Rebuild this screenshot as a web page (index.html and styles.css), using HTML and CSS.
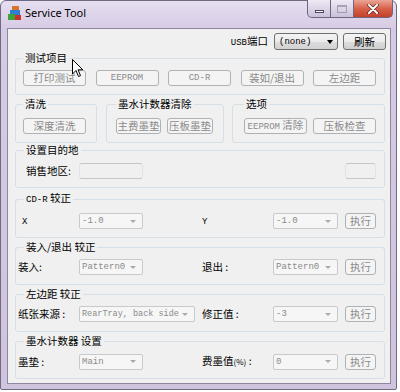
FILE: index.html
```html
<!DOCTYPE html>
<html lang="zh-CN">
<head>
    <meta charset="UTF-8">
    <title>Service Tool</title>
    <link rel="stylesheet" href="styles.css">
</head>
<body>
<div class="window">
    <div class="titlebar">
        <svg class="app-icon" width="16" height="16" viewBox="0 0 16 16">
            <rect x="5" y="1" width="7" height="6" fill="#d9722b"/>
            <rect x="3" y="5" width="10" height="6" fill="#2f7fd0"/>
            <rect x="1" y="9" width="7" height="6" fill="#3fa33a"/>
            <rect x="8" y="10" width="6" height="5" fill="#c8322a"/>
        </svg>
        <span class="title">Service Tool</span>
        <div class="caption">
            <span class="cap cap-min"><i></i></span>
            <span class="cap cap-max"><i></i></span>
            <span class="cap cap-close">
                <svg width="12" height="10" viewBox="0 0 12 10">
                    <path d="M2 1 L10 9 M10 1 L2 9" stroke="#5a2a22" stroke-width="3.4" stroke-linecap="round"/>
                    <path d="M2 1 L10 9 M10 1 L2 9" stroke="#ffffff" stroke-width="2" stroke-linecap="round"/>
                </svg>
            </span>
        </div>
    </div>

    <div class="client">
        <div class="usb-row">
            <span class="label"><span class="lat">USB</span>端口</span>
            <div class="combo combo-on"><span class="lat">(none)</span><span class="arrow"></span></div>
            <button class="btn btn-on">刷新</button>
        </div>

        <fieldset class="grp grp-test">
            <legend>测试项目</legend>
            <div class="btn-row">
                <button class="btn w63" disabled>打印测试</button>
                <button class="btn w63" disabled><span class="lat">EEPROM</span></button>
                <button class="btn w63" disabled><span class="lat">CD-R</span></button>
                <button class="btn w63" disabled>装如/退出</button>
                <button class="btn w63" disabled>左边距</button>
            </div>
        </fieldset>

        <div class="grp-line">
            <fieldset class="grp grp-clean">
                <legend>清洗</legend>
                <div class="btn-row">
                    <button class="btn w63" disabled>深度清洗</button>
                </div>
            </fieldset>
            <fieldset class="grp grp-ink">
                <legend>墨水计数器清除</legend>
                <div class="btn-row small-gap">
                    <button class="btn w45" disabled>主费墨垫</button>
                    <button class="btn w46" disabled>压板墨垫</button>
                </div>
            </fieldset>
            <fieldset class="grp grp-opt">
                <legend>选项</legend>
                <div class="btn-row small-gap">
                    <button class="btn w63" disabled><span><span class="lat">EEPROM</span> 清除</span></button>
                    <button class="btn w63" disabled>压板检查</button>
                </div>
            </fieldset>
        </div>

        <fieldset class="grp grp-form grp-dest">
            <legend>设置目的地</legend>
            <div class="form-row">
                <span class="label pad8">销售地区:</span>
                <div class="edit w64"></div>
                <span></span>
                <span></span>
                <div class="edit w31"></div>
            </div>
        </fieldset>

        <fieldset class="grp grp-form">
            <legend><span class="lat">CD-R</span> 较正</legend>
            <div class="form-row">
                <span class="label pad4"><span class="lat">X</span></span>
                <div class="combo w64"><span class="lat">-1.0</span><span class="arrow"></span></div>
                <span class="label"><span class="lat">Y</span></span>
                <div class="combo w65"><span class="lat">-1.0</span><span class="arrow"></span></div>
                <button class="btn w31" disabled>执行</button>
            </div>
        </fieldset>

        <fieldset class="grp grp-form">
            <legend>装入/退出 较正</legend>
            <div class="form-row">
                <span class="label">装入:</span>
                <div class="combo w64"><span class="lat">Pattern0</span><span class="arrow"></span></div>
                <span class="label">退出 :</span>
                <div class="combo w65"><span class="lat">Pattern0</span><span class="arrow"></span></div>
                <button class="btn w31" disabled>执行</button>
            </div>
        </fieldset>

        <fieldset class="grp grp-form">
            <legend>左边距 较正</legend>
            <div class="form-row">
                <span class="label">纸张来源 :</span>
                <div class="combo w116"><span class="lat narrow">RearTray, back side</span><span class="arrow"></span></div>
                <span class="label">修正值 :</span>
                <div class="combo w65"><span class="lat">-3</span><span class="arrow"></span></div>
                <button class="btn w31" disabled>执行</button>
            </div>
        </fieldset>

        <fieldset class="grp grp-form">
            <legend>墨水计数器 设置</legend>
            <div class="form-row">
                <span class="label">墨垫 :</span>
                <div class="combo w64"><span class="lat">Main</span><span class="arrow"></span></div>
                <span class="label">费墨值<span class="pct">(%)</span> :</span>
                <div class="combo w65"><span class="lat">0</span><span class="arrow"></span></div>
                <button class="btn w31" disabled>执行</button>
            </div>
        </fieldset>
    </div>

    <svg class="cursor" width="12" height="19" viewBox="0 0 12 19">
        <path d="M0.5 0.5 L0.5 15 L4 11.5 L6.5 17.5 L8.5 16.6 L6 10.8 L10.8 10.8 Z" fill="#ffffff" stroke="#000000" stroke-width="1"/>
    </svg>
</div>
</body>
</html>
```

FILE: styles.css
```css
* {
    box-sizing: border-box;
}

body {
    margin: 0;
    background: #ffffff;
    font-family: "Noto Sans CJK SC", sans-serif;
    font-size: 10.5px;
    color: #000000;
}

.lat {
    font-family: "Liberation Mono", monospace;
    font-size: 9px;
}

.lat.narrow {
    font-size: 8.5px;
}

.window {
    position: relative;
    width: 397px;
    height: 390px;
    display: flex;
    flex-direction: column;
    background: linear-gradient(180deg, #e6def0 0%, #d6cbe4 28px, #cfc3de 100%);
    border: 1px solid #6e6a82;
    border-radius: 6px 6px 2px 2px;
}

/* title bar */

.titlebar {
    height: 27px;
    display: flex;
    align-items: flex-start;
}

.app-icon {
    margin: 4px 0 0 6px;
}

.title {
    margin: 4px 0 0 2px;
    font-family: "Noto Sans", sans-serif;
    font-size: 11px;
    line-height: 16px;
    color: #000000;
}

.caption {
    margin-left: auto;
    margin-right: 3px;
    display: flex;
    height: 18px;
    margin-top: -1px;
}

.cap {
    height: 18px;
    display: flex;
    align-items: center;
    justify-content: center;
    border: 1px solid #6d6880;
    border-top: none;
}

.cap-min {
    width: 24px;
    border-radius: 0 0 0 5px;
    background: linear-gradient(180deg, #efe9f5, #cbc0da);
}

.cap-min i {
    width: 9px;
    height: 3px;
    margin-top: 5px;
    background: #ffffff;
    border: 1px solid #4c4860;
}

.cap-max {
    width: 23px;
    border-left: none;
    background: linear-gradient(180deg, #efe9f5, #cbc0da);
}

.cap-max i {
    width: 10px;
    height: 8px;
    border: 1px solid #8d8a9a;
    border-top-width: 2px;
    opacity: 0.7;
}

.cap-close {
    width: 39px;
    border-left: none;
    border-radius: 0 0 5px 0;
    background: linear-gradient(180deg, #eba596 0%, #d8614a 50%, #c2402b 100%);
}

/* client area */

.client {
    flex: 1;
    margin: 0 5px 5px 6px;
    padding: 4px 5px 0 7px;
    background: #f0f0f0;
    border: 1px solid #8d88a0;
    display: flex;
    flex-direction: column;
}

.usb-row {
    display: flex;
    justify-content: flex-end;
    align-items: center;
    height: 17px;
    margin-right: -1px;
}

.usb-row .label {
    margin-right: 6px;
}

.usb-row .combo {
    width: 64px;
    height: 17px;
    margin-right: 5px;
}

.label {
    line-height: 16px;
    white-space: nowrap;
}

.pad4 {
    padding-left: 4px;
}

.pad8 {
    padding-left: 8px;
}

.pct {
    font-size: 8px;
}

/* group boxes */

.grp {
    margin: 0;
    padding: 5px 0 9px 2px;
    border: 1px solid #d5dfe5;
    border-radius: 3px;
    min-width: 0;
}

.grp legend {
    padding: 0 2px;
    margin-left: 6px;
    line-height: 14px;
}

.grp-test {
    margin-top: 1px;
    padding: 5px 0 8px 7px;
}

.grp-test legend,
.grp-clean legend,
.grp-ink legend,
.grp-opt legend {
    margin-left: 0;
}

.grp-line {
    display: flex;
    margin-top: 2px;
}

.grp-line .grp {
    padding-top: 7px;
    padding-bottom: 8px;
}

.grp-clean {
    width: 82px;
    padding-left: 7px;
}

.grp-ink {
    width: 118px;
    margin-left: 9px;
    padding-left: 9px;
}

.grp-opt {
    width: 153px;
    margin-left: 8px;
    padding-left: 11px;
}

.grp-form {
    margin-top: 2px;
}

.grp-dest {
    margin-top: 0;
    padding-top: 6px;
    padding-bottom: 8px;
}

.grp-dest + .grp-form {
    margin-top: 3px;
}

.btn-row {
    display: flex;
    gap: 9.5px;
}

.btn-row.small-gap {
    gap: 6px;
}

/* controls */

.btn {
    height: 16px;
    padding: 0;
    display: flex;
    align-items: center;
    justify-content: center;
    font-family: inherit;
    font-size: 10.5px;
    line-height: 14px;
    color: #8a8a8a;
    background: #f4f4f4;
    border: 1px solid #adb2b5;
    border-radius: 3px;
    white-space: nowrap;
}

.btn-on {
    width: 43px;
    height: 17px;
    color: #000000;
    border-color: #707070;
    background: linear-gradient(180deg, #f4f4f4 0%, #ebebeb 50%, #dddddd 51%, #cfcfcf 100%);
}

.w31 { width: 31px; }
.w45 { width: 45px; }
.w46 { width: 46px; }
.w63 { width: 63px; }
.w64 { width: 64px; }
.w65 { width: 65px; }
.w116 { width: 116px; }

.combo {
    height: 16px;
    display: flex;
    align-items: center;
    padding: 0 0 0 2px;
    color: #8a8a8a;
    background: #f6f6f6;
    border: 1px solid #c6cacd;
    border-radius: 2px;
    white-space: nowrap;
}

.combo .arrow {
    margin-left: auto;
    margin-right: 6px;
    width: 0;
    height: 0;
    border-left: 3px solid transparent;
    border-right: 3px solid transparent;
    border-top: 3px solid #a9a9a9;
}

.combo-on {
    padding-left: 4px;
    color: #000000;
    border-color: #707070;
    border-radius: 3px;
    background: linear-gradient(180deg, #f3f3f3 0%, #ebebeb 50%, #dddddd 51%, #d2d2d2 100%);
}

.combo-on .arrow {
    margin-right: 4px;
    border-left-width: 3.5px;
    border-right-width: 3.5px;
    border-top: 4px solid #000000;
}

.edit {
    height: 16px;
    border: 1px solid #c3c8cd;
    border-left-color: #e1e4e7;
    border-right-color: #e1e4e7;
    border-radius: 3px;
}

.form-row {
    display: grid;
    grid-template-columns: 61px 123px 71px 72px 31px;
    align-items: center;
    height: 16px;
}

.cursor {
    position: absolute;
    left: 71px;
    top: 58px;
}
```
